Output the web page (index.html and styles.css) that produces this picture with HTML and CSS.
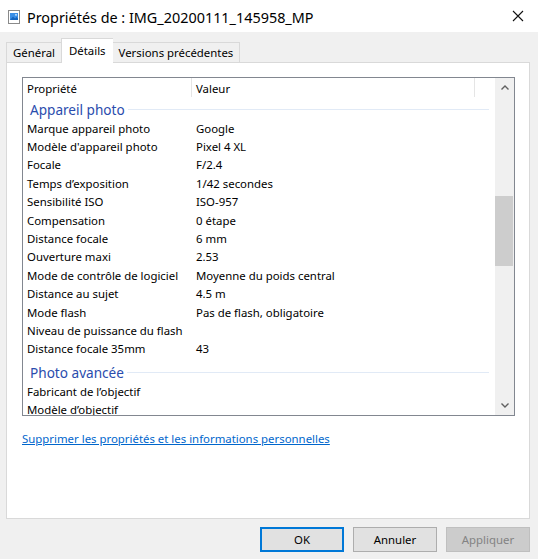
FILE: index.html
```html
<!DOCTYPE html>
<html lang="fr">
<head>
<meta charset="utf-8">
<title>Propriétés</title>
<link rel="stylesheet" href="styles.css">
</head>
<body>
<div class="dialog">
  <div class="titlebar">
    <svg class="file-icon" width="12" height="14" viewBox="0 0 12 14">
      <rect x="0.5" y="0.5" width="11" height="13" fill="#fff" stroke="#8a8a8a"/>
      <rect x="2" y="3" width="8" height="7" fill="#3a8ee6"/>
      <path d="M2 10 L5 6.5 L7 8.5 L8.5 7 L10 8.5 L10 10 Z" fill="#1565c0"/>
      <circle cx="8" cy="4.8" r="0.9" fill="#dff0ff"/>
    </svg>
    <span class="title">Propriétés de : IMG_20200111_145958_MP</span>
    <svg class="close" width="12" height="12" viewBox="0 0 12 12">
      <path d="M1 1 L11 11 M11 1 L1 11" stroke="#111" stroke-width="1.1"/>
    </svg>
  </div>
  <div class="tabs">
    <div class="tab">Général</div>
    <div class="tab active">Détails</div>
    <div class="tab">Versions précédentes</div>
  </div>
  <div class="panel">
    <div class="listbox">
      <div class="list">
        <div class="header">
          <div class="hcell c1">Propriété</div>
          <div class="hcell c2">Valeur</div>
          <div class="hcell c3"></div>
        </div>
        <div class="group first"><span>Appareil photo</span><i></i></div>
        <div class="row"><span class="c1">Marque appareil photo</span><span>Google</span></div>
        <div class="row"><span class="c1">Modèle d'appareil photo</span><span>Pixel 4 XL</span></div>
        <div class="row"><span class="c1">Focale</span><span>F/2.4</span></div>
        <div class="row"><span class="c1">Temps d’exposition</span><span>1/42 secondes</span></div>
        <div class="row"><span class="c1">Sensibilité ISO</span><span>ISO-957</span></div>
        <div class="row"><span class="c1">Compensation</span><span>0 étape</span></div>
        <div class="row"><span class="c1">Distance focale</span><span>6 mm</span></div>
        <div class="row"><span class="c1">Ouverture maxi</span><span>2.53</span></div>
        <div class="row"><span class="c1">Mode de contrôle de logiciel</span><span>Moyenne du poids central</span></div>
        <div class="row"><span class="c1">Distance au sujet</span><span>4.5 m</span></div>
        <div class="row"><span class="c1">Mode flash</span><span>Pas de flash, obligatoire</span></div>
        <div class="row"><span class="c1">Niveau de puissance du flash</span><span></span></div>
        <div class="row"><span class="c1">Distance focale 35mm</span><span>43</span></div>
        <div class="group"><span>Photo avancée</span><i></i></div>
        <div class="row"><span class="c1">Fabricant de l’objectif</span><span></span></div>
        <div class="row"><span class="c1">Modèle d’objectif</span><span></span></div>
      </div>
      <div class="scrollbar">
        <div class="arrow">
          <svg width="8" height="5" viewBox="0 0 8 5"><path d="M0.5 4.5 L4 1 L7.5 4.5" fill="none" stroke="#606060" stroke-width="1.4"/></svg>
        </div>
        <div class="track"><div class="thumb"></div></div>
        <div class="arrow">
          <svg width="8" height="5" viewBox="0 0 8 5"><path d="M0.5 0.5 L4 4 L7.5 0.5" fill="none" stroke="#606060" stroke-width="1.4"/></svg>
        </div>
      </div>
    </div>
    <a class="link" href="#">Supprimer les propriétés et les informations personnelles</a>
  </div>
  <div class="footer">
    <button class="btn default">OK</button>
    <button class="btn">Annuler</button>
    <button class="btn disabled">Appliquer</button>
  </div>
</div>
</body>
</html>
```
FILE: styles.css
```css
* { box-sizing: border-box; }
html, body { margin: 0; padding: 0; }
body {
  width: 538px;
  height: 559px;
  background: #f0f0f0;
  font-family: "Noto Sans", "Open Sans", sans-serif;
  font-size: 11.4px;
  color: #000;
  overflow: hidden;
}
.dialog { width: 538px; height: 559px; display: flex; flex-direction: column; }

.titlebar {
  height: 32px;
  flex: none;
  background: #fff;
  display: flex;
  align-items: center;
  padding-left: 8px;
}
.file-icon { margin-right: 7px; margin-top: 1px; }
.title { font-size: 14.4px; flex: 1; padding-top: 2px; }
.close { margin-right: 14px; }

.tabs {
  display: flex;
  align-items: flex-end;
  padding: 0 0 0 6px;
  height: 30px;
  flex: none;
}
.tab {
  height: 20px;
  padding: 1px 6px 0;
  border: 1px solid #d9d9d9;
  border-bottom: none;
  border-right: none;
  background: #f0f0f0;
  display: flex;
  align-items: center;
  line-height: 1;
}
.tab:last-child { border-right: 1px solid #d9d9d9; }
.tab.active {
  height: 25px;
  background: #fff;
  padding: 6px 7px 0;
  margin-bottom: -1px;
  position: relative;
  z-index: 1;
  align-items: flex-start;
}
.tab.active + .tab { border-left: none; }

.panel {
  margin-left: 6px;
  width: 524px;
  height: 457px;
  flex: none;
  background: #fff;
  border: 1px solid #d9d9d9;
  padding: 14px 0 0 15px;
}

.listbox {
  width: 493px;
  height: 339px;
  border: 1px solid #828790;
  display: flex;
  overflow: hidden;
}
.list { flex: 1; overflow: hidden; }
.header { display: flex; height: 20px; }
.hcell {
  display: flex;
  align-items: center;
  border-right: 1px solid #e5e5e5;
  padding-left: 4px;
  padding-top: 1px;
  height: 19px;
}
.hcell.c1 { width: 169px; }
.hcell.c2 { width: 283px; padding-left: 4px; }
.hcell.c3 { border-right: none; }

.group {
  height: 24px;
  display: flex;
  align-items: center;
  padding: 4px 6px 0 7px;
  color: #2a4cad;
  font-size: 13.6px;
}
.group.first { height: 21px; padding-top: 1px; }
.group span { margin-right: 3px; }
.group i { flex: 1; height: 1px; background: #e1eaf6; margin-top: 1px; }

.row {
  height: 18.4px;
  display: flex;
  align-items: center;
  padding-left: 4px;
  white-space: nowrap;
}
.row .c1 { width: 169px; }

.scrollbar {
  width: 19px;
  background: #f0f0f0;
  display: flex;
  flex-direction: column;
}
.arrow { height: 19px; display: flex; align-items: center; justify-content: center; }
.track { flex: 1; padding-top: 99px; }
.thumb { width: 18px; height: 70px; background: #cdcdcd; }

.link {
  display: inline-block;
  margin-top: 15px;
  color: #0066cc;
  text-decoration: underline;
}

.footer {
  display: flex;
  justify-content: flex-end;
  gap: 9px;
  padding: 8px 8px 0 0;
}
.btn {
  width: 84px;
  height: 25px;
  font-family: inherit;
  font-size: 11.4px;
  background: #e1e1e1;
  border: 1px solid #adadad;
  color: #000;
  padding: 0;
}
.btn.default { border: 2px solid #0078d7; }
.btn.disabled { background: #cccccc; border-color: #bfbfbf; color: #838383; }
```
